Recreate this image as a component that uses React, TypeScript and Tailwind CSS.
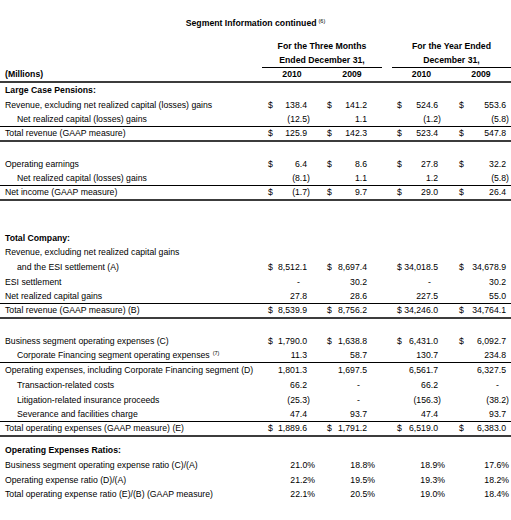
import React from "react"

type Line = "thin" | "thick"

type Row = {
  label?: string
  sup?: string
  indent?: boolean
  bold?: boolean
  dollar?: boolean
  vals?: string[]
  line?: Line
  spacer?: boolean
}

const rows: Row[] = [
  { label: "Large Case Pensions:", bold: true },
  { label: "Revenue, excluding net realized capital (losses) gains", dollar: true, vals: ["138.4", "141.2", "524.6", "553.6"] },
  { label: "Net realized capital (losses) gains", indent: true, vals: ["(12.5)", "1.1", "(1.2)", "(5.8)"], line: "thin" },
  { label: "Total revenue  (GAAP measure)", dollar: true, vals: ["125.9", "142.3", "523.4", "547.8"], line: "thick" },
  {},
  { label: "Operating earnings", dollar: true, vals: ["6.4", "8.6", "27.8", "32.2"] },
  { label: "Net realized capital (losses) gains", indent: true, vals: ["(8.1)", "1.1", "1.2", "(5.8)"], line: "thin" },
  { label: "Net income (GAAP measure)", dollar: true, vals: ["(1.7)", "9.7", "29.0", "26.4"], line: "thick" },
  {},
  {},
  { label: "Total Company:", bold: true },
  { label: "Revenue, excluding net realized capital gains" },
  { label: "and the ESI settlement (A)", indent: true, dollar: true, vals: ["8,512.1", "8,697.4", "34,018.5", "34,678.9"] },
  { label: "ESI settlement", vals: ["-", "30.2", "-", "30.2"] },
  { label: "Net realized capital gains", vals: ["27.8", "28.6", "227.5", "55.0"], line: "thin" },
  { label: "Total revenue (GAAP measure) (B)", dollar: true, vals: ["8,539.9", "8,756.2", "34,246.0", "34,764.1"], line: "thick" },
  {},
  { label: "Business segment operating expenses (C)", dollar: true, vals: ["1,790.0", "1,638.8", "6,431.0", "6,092.7"] },
  { label: "Corporate Financing segment operating expenses", sup: "(7)", indent: true, vals: ["11.3", "58.7", "130.7", "234.8"], line: "thin" },
  { label: "Operating expenses, including Corporate Financing segment (D)", vals: ["1,801.3", "1,697.5", "6,561.7", "6,327.5"] },
  { label: "Transaction-related costs", indent: true, vals: ["66.2", "-", "66.2", "-"] },
  { label: "Litigation-related insurance proceeds", indent: true, vals: ["(25.3)", "-", "(156.3)", "(38.2)"] },
  { label: "Severance and facilities charge", indent: true, vals: ["47.4", "93.7", "47.4", "93.7"], line: "thin" },
  { label: "Total operating expenses (GAAP measure) (E)", dollar: true, vals: ["1,889.6", "1,791.2", "6,519.0", "6,383.0"], line: "thick" },
  { spacer: true },
  { label: "Operating Expenses Ratios:", bold: true },
  { label: "Business segment operating expense ratio (C)/(A)", vals: ["21.0%", "18.8%", "18.9%", "17.6%"] },
  { label: "Operating expense ratio (D)/(A)", vals: ["21.2%", "19.5%", "19.3%", "18.2%"] },
  { label: "Total operating expense ratio (E)/(B)  (GAAP measure)", vals: ["22.1%", "20.5%", "19.0%", "18.4%"] },
]

// widths of the four value columns and where the $ sits inside each
const cols = [
  "w-[48px] pl-[6px]",
  "w-[60px] pl-[17px]",
  "w-[71px] pl-[27px]",
  "w-[70px] pl-[18px] pr-[2px]",
]

// percentages sit a little to the right of the figures
const pct = ["mr-[-5px]", "mr-[-5px]", "mr-[-4px]", ""]

function Num({ v, i }: { v: string; i: number }) {
  if (v === "-") return <span className="pr-[10px]">-</span>
  if (v.endsWith("%")) return <span className={pct[i]}>{v}</span>
  if (v.startsWith("(")) return <span>{v}</span>
  return <span className="pr-[3px]">{v}</span>
}

function DataRow({ row }: { row: Row }) {
  if (row.spacer) return <div className="h-[6px]" />
  const border =
    row.line === "thin"
      ? "border-b border-black"
      : row.line === "thick"
        ? "border-b-2 border-[#3c3c3c]"
        : ""
  return (
    <div className={`flex h-[14.75px] items-center ${border}`}>
      <div
        className={`w-[262px] whitespace-nowrap ${row.indent ? "pl-[17px]" : "pl-[5px]"} ${row.bold ? "font-bold" : ""}`}
      >
        {row.label}
        {row.sup && <sup className="ml-[3px] text-[5.5px]">{row.sup}</sup>}
      </div>
      {row.vals &&
        row.vals.map((v, i) => (
          <div key={i} className={`flex justify-between ${cols[i]}`}>
            <span>{row.dollar ? "$" : ""}</span>
            <Num v={v} i={i} />
          </div>
        ))}
    </div>
  )
}

export default function App() {
  return (
    <div className="w-[511px] h-[520px] bg-white text-black text-[8.7px] leading-none font-['Liberation_Sans',Arial,sans-serif] overflow-hidden">
      {/* Title */}
      <div className="pt-[19px] h-[32px] text-center font-bold">
        Segment Information continued
        <sup className="ml-[2px] text-[5.5px] font-normal">(6)</sup>
      </div>

      {/* Column headers */}
      <div className="mt-[7px] flex font-bold">
        <div className="w-[262px]" />
        <div className="w-[120px]">
          <div className="h-[15px] flex items-center justify-center">For the Three Months</div>
          <div className="h-[14px] flex items-center justify-center border-b border-black">Ended December 31,</div>
        </div>
        <div className="w-[10px]" />
        <div className="w-[119px]">
          <div className="h-[15px] flex items-center justify-center">For the Year Ended</div>
          <div className="h-[14px] flex items-center justify-center border-b border-black">December 31,</div>
        </div>
      </div>
      <div className="flex h-[15px] items-center font-bold border-b-2 border-[#3c3c3c]">
        <div className="w-[262px] pl-[5px]">(Millions)</div>
        <div className="w-[60px] text-center">2010</div>
        <div className="w-[60px] text-center">2009</div>
        <div className="w-[10px]" />
        <div className="w-[59px] text-center">2010</div>
        <div className="w-[60px] text-center">2009</div>
      </div>

      {rows.map((r, i) => (
        <DataRow key={i} row={r} />
      ))}
    </div>
  )
}
